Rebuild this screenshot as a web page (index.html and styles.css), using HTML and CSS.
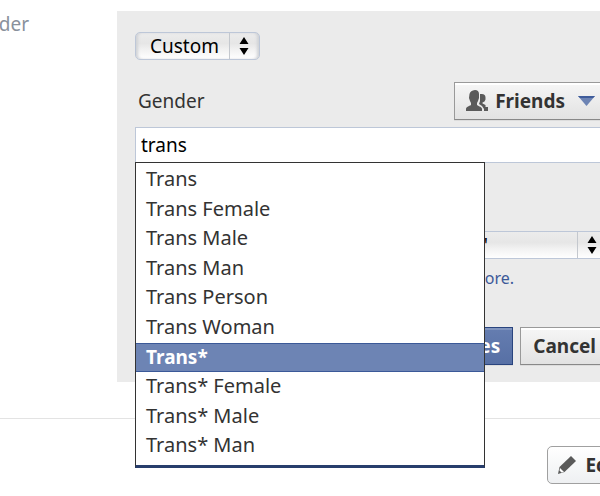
FILE: index.html
```html
<!doctype html>
<html lang="en">
<head>
    <meta charset="utf-8">
    <title>Gender</title>
    <link rel="stylesheet" href="styles.css">
</head>
<body>
    <form class="row">
        <div class="row-label"><span>Gender</span></div>
        <div class="panel">
            <div class="select select-type">
                <select aria-label="Gender type">
                    <option>Custom</option>
                </select>
                <svg class="arrows" width="10" height="18" viewBox="0 0 10 18"><path d="M5 0l4.500 7h-9zM5 18l4.500-7h-9z"/></svg>
            </div>

            <div class="field-head">
                <label for="gender">Gender</label>
                <button type="button" class="btn btn-friends">
                    <svg width="22" height="22" viewBox="0 0 22 22" fill="#5a5a5a">
                        <path d="M9 0c2.500 0 4 1.500 4 4v4l-1 3-1 2v2c2 1.500 5 2 5 4v2H0v-2c0-2 3-3 5-4v-2l-1-2-1-3 .5-4C4 1.500 6 .5 9 0z"/>
                        <path d="M14.500 4c3.500-.5 5 1 5 3.500v2l-1 2-2 1v1l3 1.500v2h2.500v4h-4v-2l-2-3-3-2 1-3V4z"/>
                    </svg>
                    Friends
                    <svg class="caret" width="17" height="10" viewBox="0 0 17 10"><path d="M0 0h17L8.500 10z" fill="#6d84b4"/><path d="M0 0h17l-2 2H2z" fill="#3f5c9b"/></svg>
                </button>
            </div>

            <div class="typeahead">
                <input type="text" id="gender" value="trans" autocomplete="off" role="combobox" aria-expanded="true" aria-controls="options">
                <ul class="options" id="options" role="listbox">
                    <li role="option">Trans</li>
                    <li role="option">Trans Female</li>
                    <li role="option">Trans Male</li>
                    <li role="option">Trans Man</li>
                    <li role="option">Trans Person</li>
                    <li role="option">Trans Woman</li>
                    <li role="option" class="selected" aria-selected="true">Trans*</li>
                    <li role="option">Trans* Female</li>
                    <li role="option">Trans* Male</li>
                    <li role="option">Trans* Man</li>
                </ul>
            </div>

            <div class="select select-pronoun">
                <select aria-label="Pronoun">
                    <option>They: "Wish them a happy birthday!"</option>
                </select>
                <svg class="arrows" width="10" height="18" viewBox="0 0 10 18"><path d="M5 0l4.500 7h-9zM5 18l4.500-7h-9z"/></svg>
            </div>
            <p class="note"><a href="#">Learn more.</a></p>

            <div class="actions">
                <button type="submit" class="btn btn-save">Save Changes</button>
                <button type="button" class="btn btn-cancel">Cancel</button>
            </div>
        </div>
    </form>

    <div class="next-row">
        <button type="button" class="btn btn-edit">
            <svg width="18" height="18" viewBox="0 0 18 18">
                <path d="M13 0l5 5L6.500 16 0 18l1.500-7z" fill="#5a5a5a"/>
                <path d="M2 12l4 4-2.500.500-2-2z" fill="#fff"/>
            </svg>
            Edit
        </button>
    </div>
</body>
</html>
```
FILE: styles.css
```css
* {
    box-sizing: border-box;
}
body {
    margin: 0;
    overflow: hidden;
    background: #fff;
    color: #333;
    font-family: "Noto Sans", "Open Sans", sans-serif;
    font-size: 19px;
    line-height: 26px;
}
button, input, select {
    font: inherit;
    color: inherit;
    margin: 0;
}
.row {
    display: flex;
    margin-top: 11px;
}
.row-label {
    display: flex;
    flex: none;
    justify-content: flex-end;
    width: 117px;
    padding-right: 88px;
    color: #89919c;
}
.panel {
    flex: 1;
    min-width: 0;
    padding: 21px 0 17px 18px;
    background: #ebebeb;
}

/* drop-downs */
.select {
    position: relative;
    border: 1px solid #bdc7d8;
    background: linear-gradient(#ececec, #e6e6e6 40%, #f2f2f2 65%, #fff);
}
.select select {
    display: block;
    width: 100%;
    height: 26px;
    padding: 0 30px 0 14px;
    border: 0;
    background: none;
    color: #000;
    line-height: 26px;
    appearance: none;
}
.select::after {
    content: "";
    position: absolute;
    top: 0;
    bottom: 0;
    right: 29px;
    border-left: 1px solid #c4c8ce;
}
.arrows {
    position: absolute;
    top: 4px;
    right: 10px;
}
.select-type {
    width: 125px;
    border-radius: 5px;
    box-shadow: inset 3px 0 3px -1px #d0d2d6, inset -3px 0 3px -1px #d0d2d6;
}
.select-pronoun {
    margin: 68px -8px 0 0;
}
.select-pronoun select {
    padding-right: 119px;
    text-align-last: right;
}

/* buttons */
.btn {
    display: flex;
    align-items: center;
    height: 38px;
    padding: 0 12px;
    border: 1px solid #999;
    border-bottom-color: #888;
    background: linear-gradient(#f6f6f6, #e2e2e2);
    box-shadow: inset 0 2px #fff, 0 1px #dcdcdc;
    font-weight: bold;
    white-space: nowrap;
}
.field-head {
    display: flex;
    align-items: center;
    justify-content: space-between;
    margin: 22px -8px 7px 3px;
}
.btn-friends {
    gap: 7px;
    padding: 0 12px 0 11px;
}
.caret {
    margin-left: 6px;
}

/* typeahead */
.typeahead {
    position: relative;
}
.typeahead input {
    display: block;
    width: 100%;
    height: 36px;
    padding: 0 5px;
    border: 1px solid #bdc7d8;
    border-right: 0;
    border-radius: 0;
    background: #fff;
    color: #000;
    outline: 0;
}
.options {
    display: grid;
    grid-auto-rows: 1fr;
    position: absolute;
    z-index: 1;
    top: 35px;
    left: 0;
    width: 350px;
    height: 306px;
    margin: 0;
    padding: 2px 0 4px;
    border: 1px solid #333;
    border-bottom: 3px solid #283e6c;
    background: #fff;
    font-size: 20px;
    list-style: none;
}
.options li {
    padding: 0 10px;
    border: 1px solid transparent;
    border-width: 1px 0;
}
.options .selected {
    border-color: #3b5998;
    background: #6d84b4;
    color: #fff;
    font-size: 19px;
    font-weight: bold;
}

.note {
    margin: 6px 86px 36px 0;
    font-size: 16px;
    text-align: right;
}
.note a {
    color: #3b5998;
    text-decoration: none;
}
.actions {
    display: flex;
    justify-content: flex-end;
    gap: 7px;
    margin-right: -9px;
}
.btn-save {
    border-color: #29447e;
    background: linear-gradient(#657db0, #5770a5);
    box-shadow: inset 0 2px #8094be, 0 1px #dcdcdc;
    color: #fff;
}

.next-row {
    display: flex;
    justify-content: flex-end;
    margin-top: 36px;
    padding-top: 27px;
    border-top: 1px solid #e3e3e3;
}
.btn-edit {
    gap: 9px;
    margin-right: -33px;
    padding: 0 10px;
    border-color: #a0a0a0;
    border-radius: 5px;
    background: linear-gradient(#fff, #eef0f2);
    box-shadow: none;
}
```
